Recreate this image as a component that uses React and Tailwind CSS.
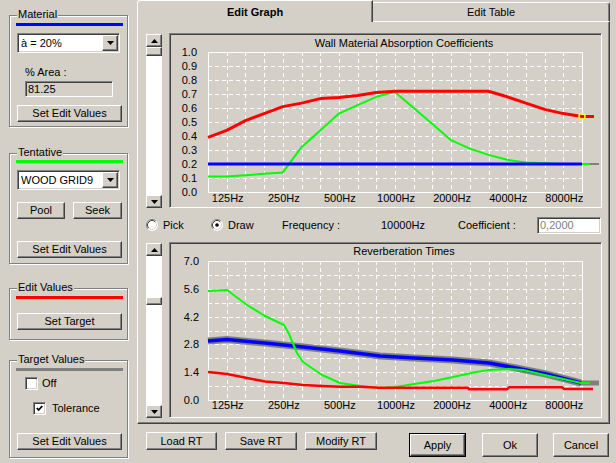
import React from 'react';

const raised = "bg-[#d4d0c8] border border-t-white border-l-white border-r-[#404040] border-b-[#404040] shadow-[inset_-1px_-1px_0_#808080]";
const sunkenWhite = "bg-white border border-t-[#808080] border-l-[#808080] border-r-white border-b-white shadow-[inset_1px_1px_0_#404040,inset_-1px_-1px_0_#d4d0c8]";
const sunkenGray = "bg-[#d4d0c8] border border-t-[#808080] border-l-[#808080] border-r-white border-b-white shadow-[inset_1px_1px_0_#404040]";
const etched = "border border-[#808080] shadow-[inset_1px_1px_0_#fff,1px_1px_0_#fff]";

function Button({ className = '', children }) {
  return (
    <div className={`${raised} flex items-center justify-center whitespace-nowrap ${className}`}>
      {children}
    </div>
  );
}

function Tri({ dir }) {
  return (
    <svg width="7" height="4" viewBox="0 0 7 4" className="block">
      <path d={dir === 'up' ? 'M3.5 0 L7 4 L0 4 Z' : 'M0 0 L7 0 L3.5 4 Z'} fill="#000" />
    </svg>
  );
}

function Combo({ className = '', text }) {
  return (
    <div className={`${sunkenWhite} p-[1px] flex items-center ${className}`}>
      <span className="flex-1 pl-[2px] whitespace-nowrap">{text}</span>
      <div className={`${raised} w-[16px] h-full flex items-center justify-center`}>
        <Tri dir="down" />
      </div>
    </div>
  );
}

function Group({ label, className = '', children }) {
  return (
    <div className={`relative ${etched} ${className}`}>
      <span className="absolute left-[7px] top-[-8px] px-[1px] bg-[#d4d0c8] leading-[13px] whitespace-nowrap">
        {label}
      </span>
      {children}
    </div>
  );
}

function Check({ checked }) {
  return (
    <div className={`${sunkenWhite} w-[13px] h-[13px] flex items-center justify-center`}>
      {checked && (
        <svg width="7" height="7" viewBox="0 0 7 7" className="block">
          <path d="M0.8 3 L2.6 5 L6.3 1" fill="none" stroke="#000" strokeWidth="1.8" />
        </svg>
      )}
    </div>
  );
}

function Radio({ checked }) {
  return (
    <svg width="12" height="12" viewBox="0 0 12 12" className="block shrink-0">
      <circle cx="6" cy="6" r="5.5" fill="#fff" />
      <path d="M2.11 9.89 A5.5 5.5 0 0 1 9.89 2.11" fill="none" stroke="#808080" />
      <path d="M9.89 2.11 A5.5 5.5 0 0 1 2.11 9.89" fill="none" stroke="#ffffff" />
      <path d="M2.82 9.18 A4.5 4.5 0 0 1 9.18 2.82" fill="none" stroke="#404040" />
      <path d="M9.18 2.82 A4.5 4.5 0 0 1 2.82 9.18" fill="none" stroke="#d4d0c8" />
      {checked && <circle cx="6" cy="6" r="1.8" fill="#000" />}
    </svg>
  );
}

function ScrollBar({ className = '', beforeClass = 'h-0', thumbClass = 'h-[9px]' }) {
  return (
    <div className={`w-[16px] flex flex-col ${className}`}>
      <div className={`${raised} h-[13px] flex items-center justify-center`}>
        <Tri dir="up" />
      </div>
      <div className={`bg-white ${beforeClass}`} />
      <div className={`${raised} ${thumbClass}`} />
      <div className="flex-1 bg-white" />
      <div className={`${raised} h-[13px] flex items-center justify-center`}>
        <Tri dir="down" />
      </div>
    </div>
  );
}

const FREQS = ['125Hz', '250Hz', '500Hz', '1000Hz', '2000Hz', '4000Hz', '8000Hz'];
const X0 = 37;
const DX = 18.7;
const X1 = 411;

function ChartSvg({ h, title, titleY, top, bottom, yLabels, labelX, freqY, children }) {
  const vs = Array.from({ length: 19 }, (_, k) => Math.round(X0 + (k + 1) * DX) + 0.5);
  const hs = Array.from({ length: 9 }, (_, k) => Math.round(top + ((k + 1) * (bottom - top)) / 10) + 0.5);
  return (
    <svg
      width="429"
      height={h}
      className="block"
      fontFamily="'Liberation Sans', Arial, sans-serif"
      fontSize="11"
    >
      <text x="233" y={titleY} textAnchor="middle" fill="#000">{title}</text>
      {vs.map((x) => (
        <line key={'v' + x} x1={x} x2={x} y1={top} y2={bottom} stroke="#fff" strokeDasharray="4 3" />
      ))}
      {hs.map((y) => (
        <line key={'h' + y} x1={X0} x2={X1} y1={y} y2={y} stroke="#fff" strokeDasharray="4 3" />
      ))}
      <rect x={X0 + 0.5} y={top + 0.5} width={X1 - X0} height={bottom - top} fill="none" stroke="#fff" />
      {yLabels.map(([t, y]) => (
        <text key={t} x={labelX} y={y + 4} textAnchor="end" fill="#000">{t}</text>
      ))}
      {FREQS.map((f, k) => (
        <text key={f} x={X0 + (1 + 3 * k) * DX + 1} y={freqY} textAnchor="middle" fill="#000">{f}</text>
      ))}
      {children}
    </svg>
  );
}

const pts = (arr) => arr.map(([x, y]) => `${x.toFixed(1)},${y.toFixed(1)}`).join(' ');
const up = (vals) => vals.map((v, i) => [X0 + i * DX, 157 - v * 140]);

const redU = [0.39, 0.44, 0.51, 0.56, 0.61, 0.635, 0.667, 0.676, 0.69, 0.71, 0.72, 0.72, 0.72, 0.72, 0.72, 0.72, 0.68, 0.635, 0.59, 0.56, 0.54];
const greenU = [0.11, 0.11, 0.12, 0.13, 0.14, 0.32, 0.44, 0.56, 0.62, 0.68, 0.715, 0.6, 0.485, 0.37, 0.31, 0.265, 0.23, 0.21, 0.205, 0.2, 0.2];

const greenL = [[37, 47], [56, 46], [76, 61], [94, 72], [113, 81], [118, 90], [126, 109], [132, 118], [151, 131], [169, 139], [189, 142], [209, 144], [225, 143], [243, 140], [263, 137], [282, 133], [305, 128], [318, 126], [338, 125], [352, 126], [365, 129], [378, 132], [392, 135], [410, 139], [419, 139]];
const blueL = [[37, 97], [56, 95.5], [94, 99], [132, 103], [169, 107], [209, 112], [243, 114], [282, 116], [318, 119], [345, 124], [375, 130], [410, 139]];
const redL = [[37, 128], [56, 130], [76, 134], [94, 137.5], [113, 139], [132, 141], [151, 142], [169, 142.7], [189, 142.7], [209, 143.7], [232, 143.7], [297, 143.7], [298, 145.3], [336, 145.3], [338, 143.3], [391, 143.3], [393, 145], [422, 145]];

export default function App() {
  const upperLabels = Array.from({ length: 11 }, (_, v) => [(v / 10).toFixed(1), 157 - v * 14]);
  const lowerLabels = [['0.0', 156], ['1.4', 128.2], ['2.8', 100.4], ['4.2', 72.6], ['5.6', 44.8], ['7.0', 17]];

  return (
    <div className="w-[616px] h-[463px] bg-[#d4d0c8] flex font-['Liberation_Sans',Arial,sans-serif] text-[11px] leading-[13px] text-black overflow-hidden">
      {/* Left column */}
      <div className="w-[137px] shrink-0 pl-[9px] flex flex-col">
        <Group label="Material" className="mt-[15px] w-[119px] h-[112px]">
          <div className="mt-[7px] ml-[6px] w-[107px] h-[3px] bg-[#0000ff]" />
          <Combo className="mt-[7px] ml-[7px] w-[103px] h-[20px]" text="à = 20%" />
          <div className="mt-[13px] ml-[15px] h-[13px]">% Area :</div>
          <div className={`${sunkenGray} mt-[2px] ml-[15px] w-[88px] h-[16px] pl-[2px] flex items-center`}>81.25</div>
          <Button className="mt-[8px] ml-[7px] w-[105px] h-[17px]">Set Edit Values</Button>
        </Group>

        <Group label="Tentative" className="mt-[26px] w-[119px] h-[111px]">
          <div className="mt-[6px] ml-[6px] w-[107px] h-[3px] bg-[#00ff00]" />
          <Combo className="mt-[7px] ml-[7px] w-[103px] h-[20px]" text="WOOD GRID9" />
          <div className="mt-[12px] ml-[7px] flex gap-[8px]">
            <Button className="w-[48px] h-[17px]">Pool</Button>
            <Button className="w-[49px] h-[17px]">Seek</Button>
          </div>
          <Button className="mt-[22px] ml-[7px] w-[105px] h-[17px]">Set Edit Values</Button>
        </Group>

        <Group label="Edit Values" className="mt-[24px] w-[119px] h-[52px]">
          <div className="mt-[7px] ml-[6px] w-[107px] h-[3px] bg-[#ff0000]" />
          <Button className="mt-[14px] ml-[7px] w-[105px] h-[17px]">Set Target</Button>
        </Group>

        <Group label="Target Values" className="mt-[20px] w-[119px] h-[98px]">
          <div className="mt-[7px] ml-[6px] w-[107px] h-[3px] bg-[#808080]" />
          <div className="mt-[6px] ml-[15px] flex items-center">
            <Check />
            <span className="ml-[4px]">Off</span>
          </div>
          <div className="mt-[12px] ml-[23px] flex items-center">
            <Check checked />
            <span className="ml-[6px]">Tolerance</span>
          </div>
          <Button className="mt-[18px] ml-[7px] w-[105px] h-[17px]">Set Edit Values</Button>
        </Group>
      </div>

      {/* Right column */}
      <div className="w-[473px] shrink-0 flex flex-col">
        <div className="flex h-[22px]">
          <div className="w-[236px] h-[22px] border-t border-l border-r border-t-white border-l-white border-r-[#404040] rounded-tl-[3px] shadow-[inset_-1px_0_0_#808080] font-bold flex items-center justify-center pt-[2px]">
            Edit Graph
          </div>
          <div className="flex-1 mt-[2px] h-[20px] border-t border-r border-b border-t-white border-r-[#404040] border-b-white rounded-tr-[3px] shadow-[inset_-1px_0_0_#808080] flex items-center justify-center pt-[1px]">
            Edit Table
          </div>
        </div>

        <div className="h-[402px] border-l border-r border-b border-l-white border-r-[#404040] border-b-[#404040] shadow-[inset_-1px_-1px_0_#808080] pl-[8px] pt-[11px] flex flex-col">
          {/* Upper chart row */}
          <div className="flex h-[175px]">
            <ScrollBar className="mt-[1px] h-[174px]" beforeClass="h-0" thumbClass="h-[9px]" />
            <div className={`${sunkenGray} ml-[7px] w-[433px] h-[175px] p-[1px]`}>
              <ChartSvg
                h={171}
                title="Wall Material Absorption Coefficients"
                titleY={12}
                top={17}
                bottom={157}
                yLabels={upperLabels}
                labelX={26}
                freqY={167}
              >
                <line x1="411" x2="428" y1="129" y2="129" stroke="#808080" strokeWidth="2" />
                <polyline points={pts([...up(greenU), [419, 129]])} fill="none" stroke="#00ff00" strokeWidth="2" strokeLinejoin="round" />
                <line x1={X0} x2={X1} y1="129" y2="129" stroke="#0000ff" strokeWidth="3" />
                <polyline points={pts([...up(redU), [423, 157 - 0.54 * 140]])} fill="none" stroke="#ff0000" strokeWidth="3" strokeLinejoin="round" />
                <circle cx={X1} cy={157 - 0.54 * 140} r="3" fill="none" stroke="#ffff00" strokeWidth="1.5" />
              </ChartSvg>
            </div>
          </div>

          {/* Middle controls row */}
          <div className="mt-[7px] h-[20px] flex items-center whitespace-nowrap">
            <Radio />
            <span className="ml-[5px] w-[48px]">Pick</span>
            <Radio checked />
            <span className="ml-[5px] w-[54px]">Draw</span>
            <span className="w-[99px]">Frequency :</span>
            <span className="w-[77px]">10000Hz</span>
            <span className="w-[79px]">Coefficient :</span>
            <div className={`${sunkenWhite} w-[64px] h-[17px] pl-[2px] flex items-center text-[#808080]`}>0,2000</div>
          </div>

          {/* Lower chart row */}
          <div className="mt-[7px] flex h-[176px]">
            <ScrollBar className="mt-[1px] h-[175px]" beforeClass="h-[41px]" thumbClass="h-[8px]" />
            <div className={`${sunkenGray} ml-[7px] w-[433px] h-[176px] p-[1px]`}>
              <ChartSvg
                h={172}
                title="Reverberation Times"
                titleY={10.5}
                top={17}
                bottom={156}
                yLabels={lowerLabels}
                labelX={28}
                freqY={165}
              >
                <line x1="408" x2="428" y1="139" y2="139" stroke="#808080" strokeWidth="5" />
                <polyline points={pts(blueL)} fill="none" stroke="#808080" strokeWidth="7" strokeLinejoin="round" strokeLinecap="butt" />
                <polyline points={pts(blueL)} fill="none" stroke="#0000ff" strokeWidth="3.5" strokeLinejoin="round" />
                <polyline points={pts(greenL)} fill="none" stroke="#00ff00" strokeWidth="2" strokeLinejoin="round" />
                <polyline points={pts(redL)} fill="none" stroke="#ff0000" strokeWidth="2.5" strokeLinejoin="round" />
              </ChartSvg>
            </div>
          </div>
        </div>

        {/* Bottom buttons */}
        <div className="mt-[8px] flex items-start pl-[9px] pr-[1px]">
          <Button className="w-[71px] h-[18px]">Load RT</Button>
          <Button className="ml-[8px] w-[72px] h-[18px]">Save RT</Button>
          <Button className="ml-[8px] w-[72px] h-[18px]">Modify RT</Button>
          <div className="ml-[32px] mt-[1px] w-[57px] h-[24px] border border-black flex">
            <Button className="flex-1">Apply</Button>
          </div>
          <Button className="ml-[16px] mt-[1px] w-[56px] h-[24px]">Ok</Button>
          <Button className="ml-[15px] mt-[1px] w-[56px] h-[24px]">Cancel</Button>
        </div>
      </div>
    </div>
  );
}
